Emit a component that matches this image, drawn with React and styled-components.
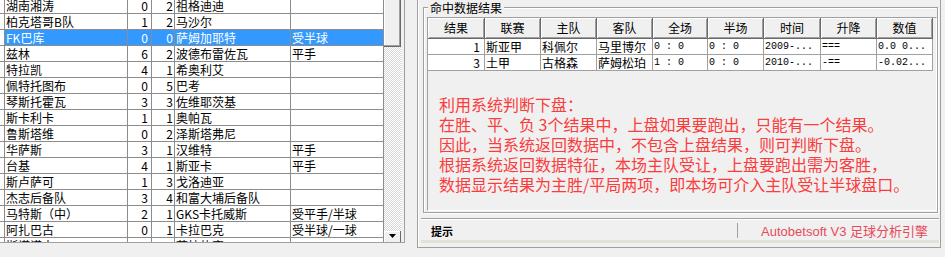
import React from "react";
import styled, { createGlobalStyle } from "styled-components";

const GlobalStyle = createGlobalStyle`
  body {
    margin: 0;
    background: #f0f0f0;
    font-family: "Noto Sans CJK SC", "Liberation Sans", sans-serif;
    font-size: 12px;
    color: #000;
    overflow: hidden;
  }
`;

const Screen = styled.div`
  display: flex;
  align-items: flex-start;
  width: 945px;
  height: 257px;
  overflow: hidden;
`;

/* left side: match list grid */
const LeftPanel = styled.div`
  display: flex;
  width: 405px;
  height: 243px;
  box-sizing: border-box;
  border-right: 1px solid #a0a0a0;
  border-bottom: 1px solid #a0a0a0;
  background: #f0f0f0;
  overflow: hidden;
`;

const GridArea = styled.div`
  width: 384px;
  height: 100%;
  overflow: hidden;
  background: #fff;
`;

const GridBody = styled.div`
  margin-top: -2px;
`;

const GridRow = styled.div`
  display: grid;
  grid-template-columns: 5px 123px 24px 23px 116px 93px;
  height: 16px;
  box-sizing: border-box;
  border-bottom: 1px solid #8c8c8c;
`;

const Cell = styled.div`
  border-right: 1px solid #8c8c8c;
  padding: ${(p) => (p.$right ? `0 ${p.$pad || 1}px 0 0` : "0 0 0 1px")};
  line-height: 15px;
  white-space: nowrap;
  overflow: hidden;
  text-align: ${(p) => (p.$right ? "right" : "left")};
  background: ${(p) => (p.$selected ? "#3399ff" : "#fff")};
  color: ${(p) => (p.$selected ? "#fff" : "#000")};
`;

const Scrollbar = styled.div`
  display: flex;
  flex-direction: column;
  width: 17px;
  height: 100%;
`;

const Thumb = styled.div`
  height: 47px;
  box-sizing: border-box;
  background: #f0f0f0;
  border-right: 1px solid #696969;
  border-bottom: 1px solid #696969;
  box-shadow: inset -1px -1px 0 #a0a0a0, inset 1px 0 0 #fff;
`;

const Track = styled.div`
  flex: 1;
  background: repeating-conic-gradient(#ffffff 0 25%, #d8d8d8 0 50%) 0 0 / 2px 2px;
`;

const DownButton = styled.div`
  display: flex;
  justify-content: center;
  height: 11px;
  box-sizing: border-box;
  padding-top: 3px;
  background: #f0f0f0;
  border-right: 1px solid #696969;
  box-shadow: inset 1px 1px 0 #fff;
`;

/* right side */
const RightPanel = styled.div`
  display: flex;
  flex-direction: column;
  margin: -4px 0 0 12px;
  width: 524px;
  height: 252px;
  box-sizing: border-box;
  border: 1px solid #a0a0a0;
  box-shadow: inset 1px 1px 0 #fff;
`;

const GroupBox = styled.div`
  position: relative;
  margin: 10px 2px 0 5px;
  height: 206px;
  box-sizing: border-box;
  padding: 9px 0 1px 3px;
  border: 1px solid #a0a0a0;
  box-shadow: inset 1px 1px 0 #fff, 1px 1px 0 #fff;
`;

const GroupTitle = styled.span`
  position: absolute;
  top: -8px;
  left: 4px;
  padding: 0 2px;
  line-height: 16px;
  background: #f0f0f0;
`;

const DataGrid = styled.div`
  height: 194px;
  box-sizing: border-box;
  border: 1px solid;
  border-color: #a0a0a0 #fff #fff #a0a0a0;
  background: #f0f0f0;
  overflow: hidden;
`;

const TableRow = styled.div`
  display: grid;
  grid-template-columns: 57px 56px 56px 56px 55px 56px 57px 56px 56px;
`;

const HeadCell = styled.div`
  height: 21px;
  box-sizing: border-box;
  background: #f0f0f0;
  border-right: 1px solid #696969;
  border-bottom: 1px solid #696969;
  box-shadow: inset 1px 1px 0 #fff, inset -1px -1px 0 #a0a0a0;
  text-align: center;
  line-height: 20px;
`;

const DataCell = styled.div`
  height: 16px;
  box-sizing: border-box;
  background: #fff;
  border-right: 1px solid #a0a0a0;
  border-bottom: 1px solid #a0a0a0;
  line-height: 15px;
  white-space: pre;
  overflow: hidden;
  text-align: ${(p) => (p.$right ? "right" : "left")};
  padding: ${(p) => (p.$right ? "0 4px 0 0" : "0 0 0 1px")};
  font-family: ${(p) => (p.$mono ? '"Liberation Mono", monospace' : "inherit")};
  font-size: ${(p) => (p.$mono ? "10px" : "12px")};
`;

const Memo = styled.div`
  padding: 23px 0 0 11px;
  color: #fa3c3c;
  font-size: 16px;
  line-height: 20px;
  white-space: pre;
`;

const StatusBar = styled.div`
  display: flex;
  align-items: center;
  margin: 5px 1px 0 3px;
  height: 25px;
  box-sizing: border-box;
  padding-top: 2px;
  border-top: 1px solid #a0a0a0;
  border-bottom: 3px solid #e3e0d7;
  box-shadow: inset 0 1px 0 #fff;
`;

const StatusHint = styled.div`
  width: 316px;
  padding-left: 10px;
  box-sizing: border-box;
  font-weight: bold;
  font-size: 11px;
`;

const StatusSep = styled.div`
  width: 1px;
  height: 15px;
  background: #a0a0a0;
`;

const StatusBrand = styled.div`
  flex: 1;
  text-align: right;
  padding-right: 11px;
  font-family: "Liberation Sans", "Noto Sans CJK SC", sans-serif;
  font-size: 13px;
  color: #e84a5a;
`;

const matches = [
  ["湖南湘涛", "0", "2", "祖格迪迪", ""],
  ["柏克塔哥B队", "1", "2", "马沙尔", ""],
  ["FK巴库", "0", "0", "萨姆加耶特", "受半球"],
  ["兹林", "6", "2", "波德布雷佐瓦", "平手"],
  ["特拉凯", "4", "1", "希奥利艾", ""],
  ["佩特托图布", "0", "5", "巴考", ""],
  ["琴斯托霍瓦", "3", "3", "佐维耶茨基", ""],
  ["斯卡利卡", "1", "1", "奥帕瓦", ""],
  ["鲁斯塔维", "0", "2", "泽斯塔弗尼", ""],
  ["华萨斯", "3", "1", "汉维特", "平手"],
  ["台基", "4", "1", "斯亚卡", "平手"],
  ["斯卢萨可", "1", "3", "戈洛迪亚", ""],
  ["杰志后备队", "3", "4", "和富大埔后备队", ""],
  ["马特斯（中）", "2", "1", "GKS卡托威斯", "受平手/半球"],
  ["阿扎巴古", "0", "1", "卡拉巴克", "受半球/一球"],
  ["斯塔诺夫", "1", "1", "萨拉热窝", ""],
];

const heads = ["结果", "联赛", "主队", "客队", "全场", "半场", "时间", "升降", "数值"];

const results = [
  ["1", "斯亚甲", "科佩尔", "马里博尔", "0 : 0", "0 : 0", "2009-...", "===", "0.0 0..."],
  ["3", "土甲", "古格森", "萨姆松珀", "1 : 0", "0 : 0", "2010-...", "-==", "-0.02..."],
];

const memo = `利用系统判断下盘：
在胜、平、负 3个结果中，上盘如果要跑出，只能有一个结果。
因此，当系统返回数据中，不包含上盘结果，则可判断下盘。
根据系统返回数据特征，本场主队受让，上盘要跑出需为客胜，
数据显示结果为主胜/平局两项，即本场可介入主队受让半球盘口。`;

export default function App() {
  return (
    <>
      <GlobalStyle />
      <Screen>
        <LeftPanel>
          <GridArea>
            <GridBody>
              {matches.map((m, i) => {
                const sel = i === 2;
                return (
                  <GridRow key={i}>
                    <Cell />
                    <Cell $selected={sel}>{m[0]}</Cell>
                    <Cell $selected={sel} $right $pad={3}>{m[1]}</Cell>
                    <Cell $selected={sel} $right>{m[2]}</Cell>
                    <Cell $selected={sel}>{m[3]}</Cell>
                    <Cell $selected={sel}>{m[4]}</Cell>
                  </GridRow>
                );
              })}
            </GridBody>
          </GridArea>
          <Scrollbar>
            <Thumb />
            <Track />
            <DownButton>
              <svg width="7" height="4" viewBox="0 0 7 4">
                <polygon points="0,0 7,0 3.5,4" fill="#000" />
              </svg>
            </DownButton>
          </Scrollbar>
        </LeftPanel>

        <RightPanel>
          <GroupBox>
            <GroupTitle>命中数据结果</GroupTitle>
            <DataGrid>
              <TableRow>
                {heads.map((h) => (
                  <HeadCell key={h}>{h}</HeadCell>
                ))}
              </TableRow>
              {results.map((r, i) => (
                <TableRow key={i}>
                  {r.map((v, j) => (
                    <DataCell key={j} $right={j === 0} $mono={j >= 4}>
                      {v}
                    </DataCell>
                  ))}
                </TableRow>
              ))}
              <Memo>{memo}</Memo>
            </DataGrid>
          </GroupBox>
          <StatusBar>
            <StatusHint>提示</StatusHint>
            <StatusSep />
            <StatusBrand>Autobetsoft V3 足球分析引擎</StatusBrand>
          </StatusBar>
        </RightPanel>
      </Screen>
    </>
  );
}
